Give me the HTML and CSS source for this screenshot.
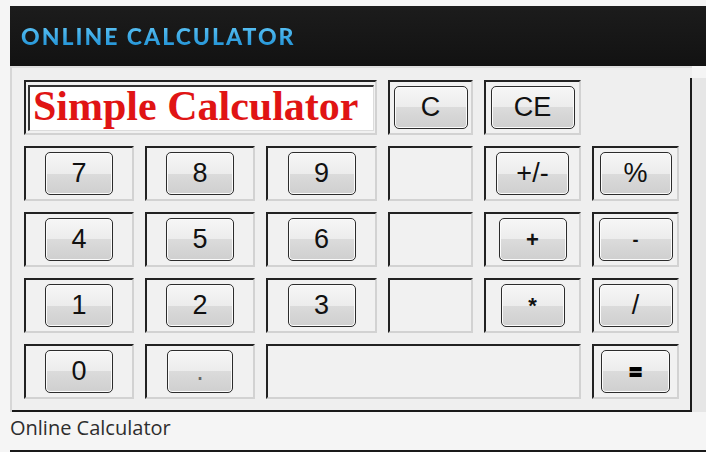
FILE: index.html
```html
<!DOCTYPE html>
<html lang="en">
<head>
<meta charset="utf-8">
<title>Online Calculator</title>
<link rel="stylesheet" href="styles.css">
</head>
<body>
<div class="page">
  <header class="header">
    <h1 class="title">ONLINE CALCULATOR</h1>
  </header>
  <div class="panel">
    <div class="keys">
      <div class="cell display"><div class="screen">Simple Calculator</div></div>
      <div class="cell"><button class="key w74">C</button></div>
      <div class="cell"><button class="key w84">CE</button></div>
      <div class="spacer"></div>

      <div class="cell"><button class="key w68">7</button></div>
      <div class="cell"><button class="key w68">8</button></div>
      <div class="cell"><button class="key w68">9</button></div>
      <div class="cell"></div>
      <div class="cell"><button class="key w73">+/-</button></div>
      <div class="cell"><button class="key w72">%</button></div>

      <div class="cell"><button class="key w68">4</button></div>
      <div class="cell"><button class="key w68">5</button></div>
      <div class="cell"><button class="key w68">6</button></div>
      <div class="cell"></div>
      <div class="cell"><button class="key w68 sym-plus">+</button></div>
      <div class="cell"><button class="key w74 sym-minus">-</button></div>

      <div class="cell"><button class="key w68">1</button></div>
      <div class="cell"><button class="key w68">2</button></div>
      <div class="cell"><button class="key w68">3</button></div>
      <div class="cell"></div>
      <div class="cell"><button class="key w64 sym-star">*</button></div>
      <div class="cell"><button class="key w74">/</button></div>

      <div class="cell"><button class="key w68">0</button></div>
      <div class="cell"><button class="key w66 sym-dot">.</button></div>
      <div class="cell wide"></div>
      <div class="cell"><button class="key w69 sym-eq">=</button></div>
    </div>
  </div>
  <p class="footer">Online Calculator</p>
</div>
</body>
</html>
```
FILE: styles.css
```css
html, body {
  margin: 0;
  padding: 0;
}

body {
  background: #f5f5f5;
  width: 706px;
  height: 452px;
  overflow: hidden;
}

.page {
  padding: 6px 0 0 10px;
}

.header {
  height: 60px;
  background: linear-gradient(#1c1c1c, #121212);
  display: flex;
  align-items: center;
  padding-left: 11px;
}

.title {
  margin: 0;
  font: 900 23px/1 "Lato", "DejaVu Sans", sans-serif;
  letter-spacing: 2px;
  background: linear-gradient(#5cc4f6, #1f90d4);
  -webkit-background-clip: text;
  background-clip: text;
  color: transparent;
}

.panel {
  width: max-content;
  background: #efefef;
  border-top: 2px solid #dedede;
  border-left: 2px solid #d6d6d6;
  padding-top: 10px;
}

.keys {
  display: grid;
  grid-template-columns: 110px 110px 111px 85px 97px 87px;
  grid-template-rows: repeat(5, 55px);
  gap: 11px;
  padding: 2px 11px 11px 12px;
  border-right: 2px solid #1a1a1a;
  border-bottom: 2px solid #1a1a1a;
  box-shadow: 14px 0 0 #e6e6e6;
}

.cell {
  box-sizing: border-box;
  border-top: 2px solid #222;
  border-left: 2px solid #222;
  border-right: 2px solid #d2d2d2;
  border-bottom: 2px solid #d2d2d2;
  background: #f1f1f1;
  display: flex;
  align-items: center;
  justify-content: center;
}

.display {
  grid-column: span 3;
  align-items: stretch;
  justify-content: stretch;
  padding: 3px 1px 2px 2px;
}

.wide {
  grid-column: span 3;
}

.screen {
  flex: 1;
  background: #fff;
  border-top: 2px solid #333;
  border-left: 2px solid #333;
  border-right: 1px solid #dcdcdc;
  border-bottom: 1px solid #dcdcdc;
  padding-left: 3px;
  font: bold 42px/38px "Liberation Serif", "Times New Roman", serif;
  color: #e01414;
  white-space: nowrap;
}

.key {
  box-sizing: border-box;
  height: 43px;
  padding: 0;
  border: 1.5px solid #2c2c2c;
  border-radius: 5px;
  background: linear-gradient(#f6f6f6, #ececec 50%, #dbdbdb 50%, #cfcfcf);
  box-shadow: inset 0 0 0 1px #fbfbfb;
  font: 27px/1 "Liberation Sans", Arial, sans-serif;
  color: #111;
}

.w64 { width: 64px; }
.w66 { width: 66px; }
.w68 { width: 68px; }
.w69 { width: 69px; }
.w72 { width: 72px; }
.w73 { width: 73px; }
.w74 { width: 74px; }
.w84 { width: 84px; }

.sym-plus {
  font-size: 22px;
  font-weight: bold;
}

.sym-minus {
  font-size: 18px;
  font-weight: bold;
}

.sym-star {
  font-size: 22px;
  font-weight: bold;
}

.sym-dot {
  color: #666;
}

.sym-eq {
  font-size: 20px;
  font-weight: bold;
  -webkit-text-stroke: 2px #000;
  color: #000;
}

.footer {
  margin: 0;
  height: 34px;
  padding-top: 4px;
  border-bottom: 2px solid #1a1a1a;
  font: 20px/24px "Open Sans", "Liberation Sans", sans-serif;
  color: #2e2e2e;
}
```
